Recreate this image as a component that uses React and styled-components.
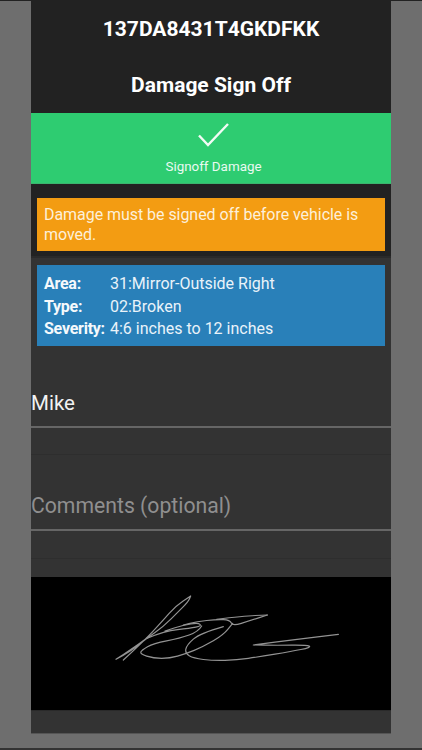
import styled, { createGlobalStyle } from "styled-components";

const GlobalStyle = createGlobalStyle`
  html, body {
    margin: 0;
    padding: 0;
    background: #6e6e6e;
    font-family: Roboto, "Liberation Sans", sans-serif;
  }
`;

const details = [
  { label: "Area:", value: "31:Mirror-Outside Right" },
  { label: "Type:", value: "02:Broken" },
  { label: "Severity:", value: "4:6 inches to 12 inches" },
];

// signature strokes, as sampled points (a repeated point keeps a sharp tip)
const strokes = [
  [[100, 270], [160, 215], [220, 150], [255, 110], [302, 78], [302, 78], [295, 95], [265, 125], [220, 170], [170, 205], [120, 245], [78, 268], [78, 268], [120, 240], [170, 205]],
  [[170, 205], [225, 183], [300, 175], [335, 168], [325, 158], [280, 165], [225, 183]],
  [[532, 135], [532, 135], [480, 152], [428, 168], [420, 150], [380, 148], [320, 155], [280, 165]],
  [[380, 148], [460, 138], [532, 135]],
  [[335, 168], [325, 185], [270, 205], [190, 220], [155, 240], [150, 252], [190, 265], [240, 265], [285, 252], [340, 230], [400, 195], [428, 160]],
  [[400, 170], [330, 190], [290, 225], [285, 250], [310, 265], [370, 272], [440, 270], [510, 260], [600, 245], [665, 232], [650, 225], [560, 226], [490, 225], [490, 225], [620, 208], [745, 193]],
];

function smooth(points) {
  let d = `M${points[0][0]} ${points[0][1]}`;
  for (let i = 1; i < points.length - 1; i++) {
    const [x, y] = points[i];
    const [nx, ny] = points[i + 1];
    d += `Q${x} ${y} ${(x + nx) / 2} ${(y + ny) / 2}`;
  }
  const last = points[points.length - 1];
  return `${d}L${last[0]} ${last[1]}`;
}

function App() {
  return (
    <Screen>
      <GlobalStyle />
      <Panel>
        <Header>
          <Vin>137DA8431T4GKDFKK</Vin>
          <Title>Damage Sign Off</Title>
        </Header>
        <SignoffButton>
          <svg width="32" height="25" viewBox="0 0 32 25" fill="none">
            <path d="M1 12.5L10 22L30 1" stroke="#f2fbf5" strokeWidth="2.4" />
          </svg>
          <span>Signoff Damage</span>
        </SignoffButton>
        <WarningZone>
          <Warning>Damage must be signed off before vehicle is moved.</Warning>
        </WarningZone>
        <Body>
          <Details>
            {details.map((d) => (
              <DetailRow key={d.label}>
                <b>{d.label}</b>
                <span>{d.value}</span>
              </DetailRow>
            ))}
          </Details>
          <Field $top={44}>Mike</Field>
          <Gap $height={27} />
          <Field $top={38} $placeholder>
            Comments (optional)
          </Field>
          <Gap $height={28} />
          <SignatureBox>
            <svg width="360" height="133" viewBox="-177 21 1080 399" fill="none">
              {strokes.map((points, i) => (
                <path
                  key={i}
                  d={smooth(points)}
                  stroke="#939393"
                  strokeWidth="3.6"
                  strokeLinecap="round"
                  strokeLinejoin="round"
                />
              ))}
            </svg>
          </SignatureBox>
        </Body>
      </Panel>
    </Screen>
  );
}

export default App;

const Screen = styled.div`
  box-sizing: border-box;
  height: 750px;
  overflow: hidden;
  border-top: 1px solid #222;
  border-bottom: 2px solid #333;
  padding: 0 31px;
  background: #6e6e6e;
`;

const Panel = styled.div`
  width: 360px;
  height: 733px;
  background: #333;
  border-bottom: 1px solid #555;
  box-sizing: border-box;
`;

const Header = styled.div`
  height: 112px;
  background: #222;
  color: #fff;
  text-align: center;
  font-weight: 700;
  font-size: 21px;
  display: flex;
  flex-direction: column;
  padding-top: 15px;
  box-sizing: border-box;
`;

const Vin = styled.div`
  line-height: 26px;
`;

const Title = styled.div`
  margin-top: 30px;
  line-height: 26px;
`;

const SignoffButton = styled.div`
  height: 71px;
  background: #2ecc71;
  color: #eafaf1;
  font-size: 13.4px;
  display: flex;
  flex-direction: column;
  align-items: center;
  box-sizing: border-box;
  padding: 10px 0 0 5px;
  gap: 11px;
  border-bottom: 1px solid #3bb56e;
`;

const WarningZone = styled.div`
  height: 74px;
  background: #222;
  padding: 14px 6px 0;
  box-sizing: border-box;
  border-bottom: 2px solid #2a2a2a;
`;

const Warning = styled.div`
  height: 53px;
  box-sizing: border-box;
  background: #f39c12;
  color: #fdf0da;
  font-size: 16px;
  line-height: 20px;
  padding: 7px 7px;
  letter-spacing: -0.05px;
`;

const Body = styled.div`
  padding-top: 7px;
`;

const Details = styled.div`
  margin: 0 6px;
  height: 81px;
  box-sizing: border-box;
  background: #2980b9;
  color: #eaf3f9;
  font-size: 16px;
  padding: 8px 7px;
`;

const DetailRow = styled.div`
  display: grid;
  grid-template-columns: 66px 1fr;
  line-height: 22.5px;

  b {
    font-weight: 700;
    color: #f5f9fc;
    white-space: nowrap;
    letter-spacing: -0.25px;
  }
`;

const Field = styled.div`
  margin-top: ${(p) => p.$top}px;
  height: 36px;
  line-height: 26px;
  font-size: ${(p) => (p.$placeholder ? 21.2 : 20.5)}px;
  color: ${(p) => (p.$placeholder ? "#8f8f8f" : "#f2f2f2")};
  border-bottom: 2px solid #666;
`;

const Gap = styled.div`
  height: ${(p) => p.$height - 1}px;
  border-bottom: 1px solid #2e2e2e;
`;

const SignatureBox = styled.div`
  margin-top: 18px;
  height: 133px;
  background: #000;
  border-bottom: 1px solid #2a2a2a;

  svg {
    display: block;
  }
`;
